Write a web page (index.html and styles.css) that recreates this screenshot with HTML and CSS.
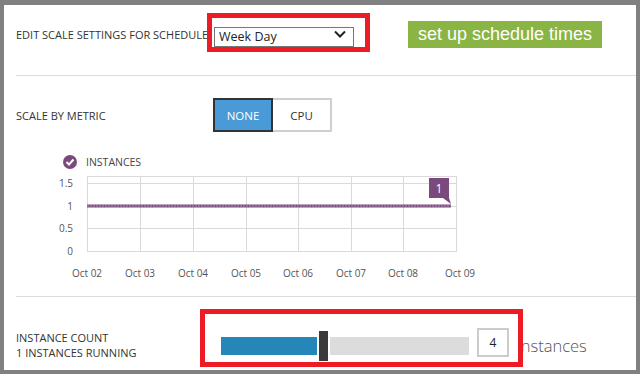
FILE: index.html
```html
<!DOCTYPE html>
<html lang="en">
<head>
    <meta charset="UTF-8">
    <meta name="viewport" content="width=device-width, initial-scale=1.0">
    <title>Scale Settings</title>
    <link rel="stylesheet" href="styles.css">
</head>
<body>
    <div class="panel">
        <!-- Schedule selection -->
        <div class="section schedule-row">
            <span class="label">EDIT SCALE SETTINGS FOR SCHEDULE</span>
            <div class="select-wrap">
                <select id="schedule">
                    <option>Week Day</option>
                    <option>Week End</option>
                </select>
                <svg class="chevron" width="12" height="8" viewBox="0 0 12 8"><path d="M1 1.5 L6 6.5 L11 1.5" fill="none" stroke="#222" stroke-width="2"/></svg>
            </div>
            <button class="schedule-btn">set up schedule times</button>
        </div>
        <hr>

        <!-- Metric -->
        <div class="section metric-row">
            <span class="label">SCALE BY METRIC</span>
            <div class="toggle">
                <button class="active">NONE</button>
                <button>CPU</button>
            </div>
        </div>

        <svg class="chart" width="440" height="135" viewBox="0 0 440 135">
            <circle cx="30" cy="12" r="7" fill="#7a4a7c"/>
            <path d="M26.5 12 L29 14.5 L33.5 9.5" fill="none" stroke="#fff" stroke-width="2"/>
            <text x="46" y="16" class="legend">INSTANCES</text>

            <g stroke="#dadada" stroke-width="1">
                <rect x="47.5" y="26.5" width="369" height="75" fill="none"/>
                <line x1="47" y1="33.5" x2="417" y2="33.5"/>
                <line x1="47" y1="56.5" x2="417" y2="56.5"/>
                <line x1="47" y1="78.5" x2="417" y2="78.5"/>
                <line x1="100.5" y1="26" x2="100.5" y2="102"/>
                <line x1="153.5" y1="26" x2="153.5" y2="102"/>
                <line x1="206.5" y1="26" x2="206.5" y2="102"/>
                <line x1="258.5" y1="26" x2="258.5" y2="102"/>
                <line x1="311.5" y1="26" x2="311.5" y2="102"/>
                <line x1="363.5" y1="26" x2="363.5" y2="102"/>
            </g>

            <g class="axis" text-anchor="end">
                <text x="33" y="37">1.5</text>
                <text x="33" y="60">1</text>
                <text x="33" y="82">0.5</text>
                <text x="33" y="105">0</text>
            </g>

            <line x1="47" y1="56" x2="411" y2="56" stroke="#7a4a7c" stroke-width="3"/>
            <line x1="47" y1="56" x2="411" y2="56" stroke="#b58fb6" stroke-width="1" stroke-dasharray="2 1"/>

            <rect x="389" y="28" width="20" height="20" fill="#7a4a7c"/>
            <path d="M403 48 L409 48 L411 54 Z" fill="#7a4a7c"/>
            <text x="399" y="43" class="tip" text-anchor="middle">1</text>

            <g class="axis" text-anchor="middle">
                <text x="47" y="127">Oct 02</text>
                <text x="100" y="127">Oct 03</text>
                <text x="153" y="127">Oct 04</text>
                <text x="206" y="127">Oct 05</text>
                <text x="258" y="127">Oct 06</text>
                <text x="311" y="127">Oct 07</text>
                <text x="363" y="127">Oct 08</text>
                <text x="420" y="127">Oct 09</text>
            </g>
        </svg>
        <hr>

        <!-- Instance count -->
        <div class="section count-row">
            <div class="count-label">
                <div class="label">INSTANCE COUNT</div>
                <div class="label">1 INSTANCES RUNNING</div>
            </div>
            <div class="slider">
                <div class="fill"></div>
                <div class="thumb"></div>
                <div class="track"></div>
            </div>
            <input class="count-input" type="text" value="4">
            <span class="unit">instances</span>
        </div>

        <!-- annotation boxes -->
        <div class="mark mark-top"></div>
        <div class="mark mark-bottom"></div>
    </div>
</body>
</html>
```

FILE: styles.css
```css
body {
    margin: 0;
    padding: 5px 4px 4px 4px;
    background-color: #808080;
    font-family: "Open Sans", "Noto Sans", sans-serif;
    color: #333;
}

.panel {
    position: relative;
    background-color: #fff;
    height: 365px;
    overflow: hidden;
}

.label {
    font-size: 11px;
    color: #333;
    white-space: nowrap;
}

hr {
    margin: 0 0 0 12px;
    border: none;
    border-top: 1px solid #dcdcdc;
}

.section {
    display: flex;
    align-items: center;
    padding-left: 12px;
}

/* schedule row */
.schedule-row {
    height: 58px;
    margin-bottom: 12px;
}

.schedule-row .label {
    width: 198px;
    overflow: hidden;
}

.select-wrap {
    position: relative;
    width: 140px;
    height: 20px;
}

.select-wrap select {
    appearance: none;
    -webkit-appearance: none;
    width: 140px;
    height: 20px;
    margin: 0;
    padding: 0 0 0 4px;
    border: 1px solid #777;
    border-radius: 0;
    background: #fff;
    font-family: "Open Sans", sans-serif;
    font-size: 12.5px;
    color: #222;
}

.chevron {
    position: absolute;
    right: 8px;
    top: 6px;
}

.schedule-btn {
    margin-left: 54px;
    width: 194px;
    height: 27px;
    padding: 0;
    border: none;
    background-color: #8ab544;
    color: #fff;
    font-family: "Liberation Sans", Arial, sans-serif;
    font-size: 18px;
}

/* metric row */
.metric-row {
    height: 36px;
    padding-top: 22px;
    align-items: flex-start;
}

.metric-row .label {
    width: 197px;
    margin-top: 10px;
}

.toggle {
    display: flex;
}

.toggle button {
    width: 60px;
    height: 34px;
    padding: 0;
    border: 2px solid #cfcfcf;
    background: #fff;
    color: #333;
    font-family: "Open Sans", sans-serif;
    font-size: 11.5px;
}

.toggle button + button {
    border-left: none;
    width: 59px;
}

.toggle .active {
    background-color: #4a9ad8;
    border-color: #333;
    color: #fff;
}

/* chart */
.chart {
    display: block;
    margin: 16px 0 11px 36px;
    font-family: "Open Sans", sans-serif;
}

.chart .legend {
    font-size: 10.5px;
    fill: #444;
}

.chart .axis {
    font-size: 10px;
    fill: #555;
}

.chart .tip {
    font-size: 12px;
    fill: #fff;
}

/* instance count */
.count-row {
    height: 49px;
    padding-top: 23px;
}

.count-label {
    width: 205px;
    line-height: 15px;
}

.slider {
    display: flex;
    align-items: center;
    gap: 2px;
    margin-top: 2px;
}

.fill {
    width: 96px;
    height: 18px;
    background-color: #2587b8;
}

.thumb {
    width: 9px;
    height: 30px;
    background-color: #3a3a3a;
}

.track {
    width: 139px;
    height: 18px;
    background-color: #dcdcdc;
}

.count-input {
    box-sizing: border-box;
    width: 32px;
    height: 29px;
    margin: 0 0 4px 8px;
    border: 2px solid #ccc;
    text-align: center;
    font-family: "Open Sans", sans-serif;
    font-size: 12px;
    color: #222;
}

.unit {
    margin-left: 8px;
    margin-top: 2px;
    font-size: 16.5px;
    font-weight: 300;
    color: #555;
}

/* red annotation boxes */
.mark {
    position: absolute;
    box-sizing: border-box;
    border: 5px solid #ed1c24;
}

.mark-top {
    left: 203px;
    top: 8px;
    width: 163px;
    height: 39px;
}

.mark-bottom {
    left: 196px;
    top: 304px;
    width: 323px;
    height: 58px;
}
```
